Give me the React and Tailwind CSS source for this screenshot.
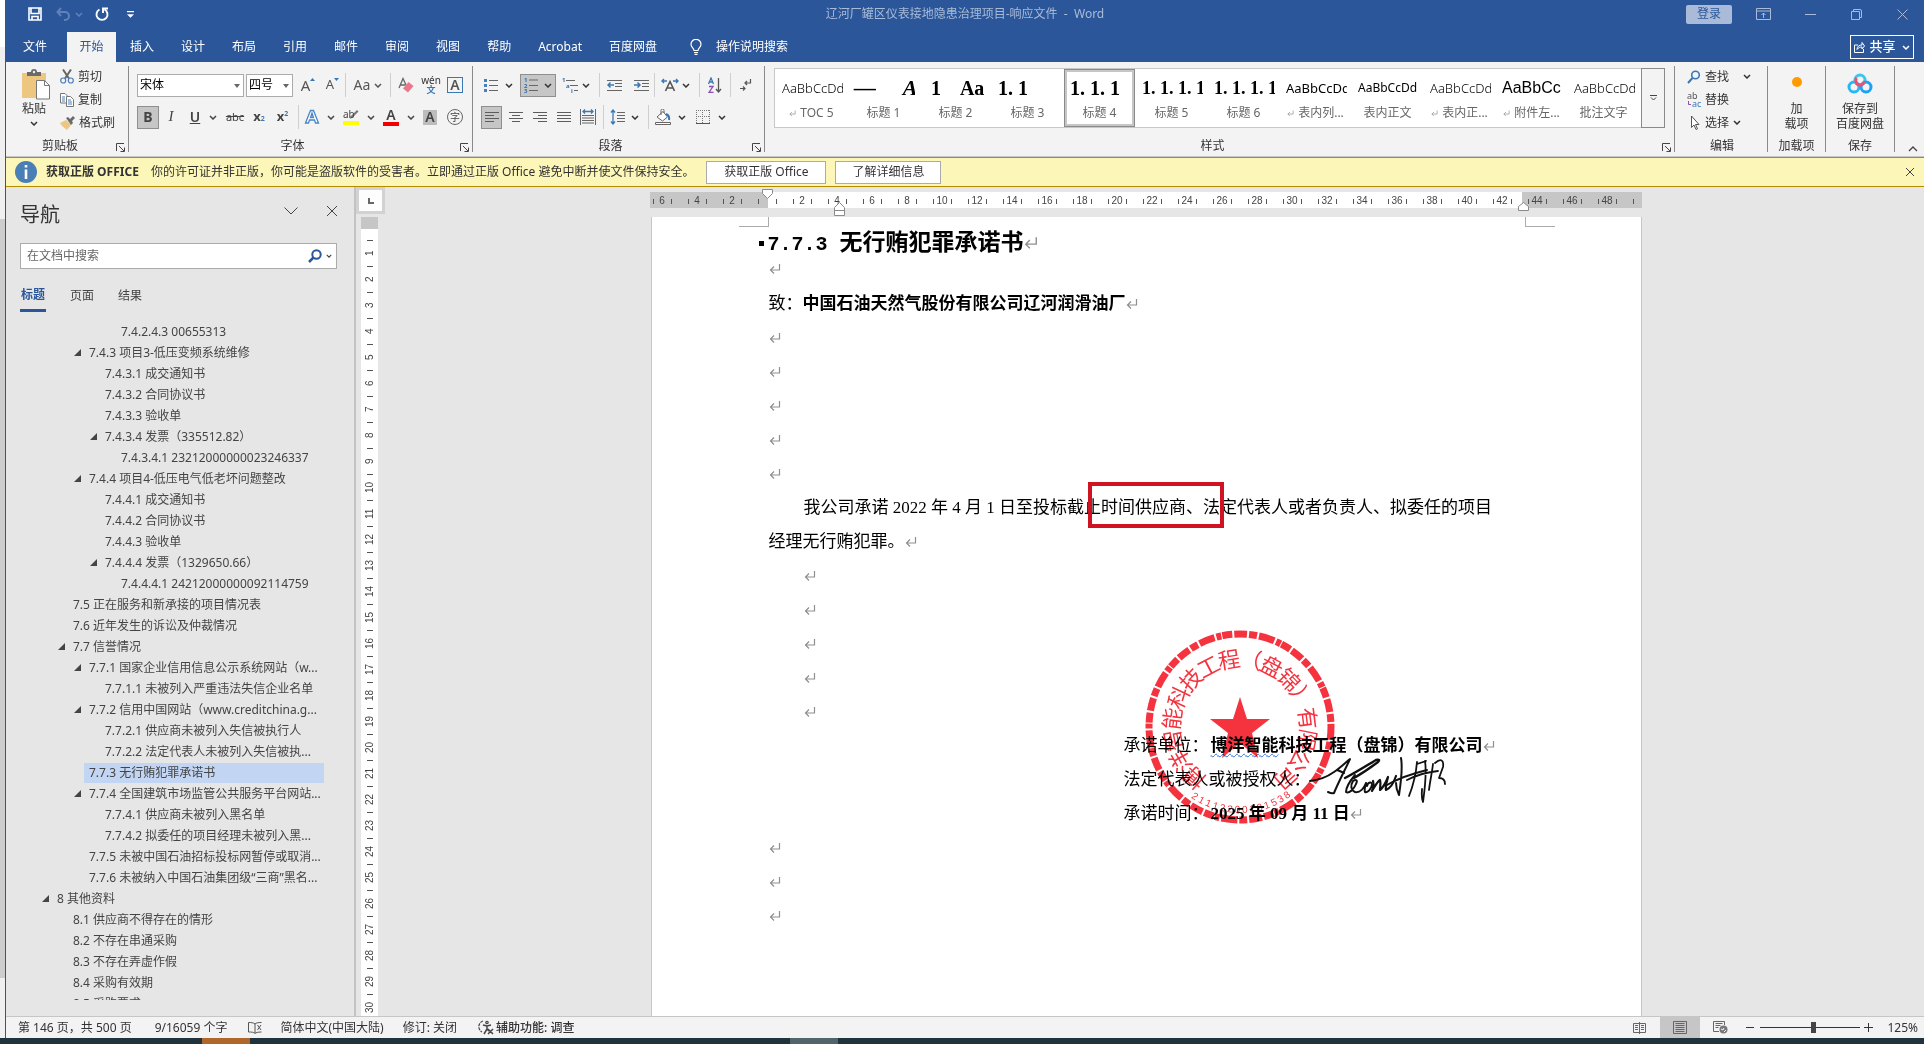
import { useState } from "react";

const tabs = ["插入", "设计", "布局", "引用", "邮件", "审阅", "视图", "帮助", "Acrobat", "百度网盘"];

const outline = [
  { level: 4, text: "7.4.2.4.3 00655313" },
  { level: 2, text: "7.4.3 项目3-低压变频系统维修", open: true },
  { level: 3, text: "7.4.3.1 成交通知书" },
  { level: 3, text: "7.4.3.2 合同协议书" },
  { level: 3, text: "7.4.3.3 验收单" },
  { level: 3, text: "7.4.3.4 发票（335512.82）", open: true },
  { level: 4, text: "7.4.3.4.1 23212000000023246337" },
  { level: 2, text: "7.4.4 项目4-低压电气低老坏问题整改", open: true },
  { level: 3, text: "7.4.4.1 成交通知书" },
  { level: 3, text: "7.4.4.2 合同协议书" },
  { level: 3, text: "7.4.4.3 验收单" },
  { level: 3, text: "7.4.4.4 发票（1329650.66）", open: true },
  { level: 4, text: "7.4.4.4.1 24212000000092114759" },
  { level: 1, text: "7.5 正在服务和新承接的项目情况表" },
  { level: 1, text: "7.6 近年发生的诉讼及仲裁情况" },
  { level: 1, text: "7.7 信誉情况", open: true },
  { level: 2, text: "7.7.1 国家企业信用信息公示系统网站（w...", open: true },
  { level: 3, text: "7.7.1.1 未被列入严重违法失信企业名单" },
  { level: 2, text: "7.7.2 信用中国网站（www.creditchina.g...", open: true },
  { level: 3, text: "7.7.2.1 供应商未被列入失信被执行人" },
  { level: 3, text: "7.7.2.2 法定代表人未被列入失信被执..." },
  { level: 2, text: "7.7.3 无行贿犯罪承诺书", active: true },
  { level: 2, text: "7.7.4 全国建筑市场监管公共服务平台网站...", open: true },
  { level: 3, text: "7.7.4.1 供应商未被列入黑名单" },
  { level: 3, text: "7.7.4.2 拟委任的项目经理未被列入黑..." },
  { level: 2, text: "7.7.5 未被中国石油招标投标网暂停或取消..." },
  { level: 2, text: "7.7.6 未被纳入中国石油集团级“三商”黑名..." },
  { level: 0, text: "8 其他资料", open: true },
  { level: 1, text: "8.1 供应商不得存在的情形" },
  { level: 1, text: "8.2 不存在串通采购" },
  { level: 1, text: "8.3 不存在弄虚作假" },
  { level: 1, text: "8.4 采购有效期" },
  { level: 1, text: "8.5 采购要求" },
];

const indents = ["pl-9", "pl-[52px]", "pl-[68px]", "pl-[84px]", "pl-[100px]"];

const serif = "font-['Liberation_Serif','Noto_Sans_CJK_SC',serif]";

const styles = [
  { name: "TOC 5", mark: true, sample: "AaBbCcDd", cls: "text-[13px] font-light" },
  { name: "标题 1", sample: "—     A", cls: "font-['Liberation_Serif',serif] text-[22px] font-bold italic" },
  { name: "标题 2", sample: " 1    Aa", cls: "font-['Liberation_Serif',serif] text-xl font-bold" },
  { name: "标题 3", sample: "1. 1       A", cls: "font-['Liberation_Serif',serif] text-xl font-bold" },
  { name: "标题 4", sample: "1. 1. 1", cls: "font-['Liberation_Serif',serif] text-xl font-bold", active: true },
  { name: "标题 5", sample: "1. 1. 1. 1", cls: "font-['Liberation_Serif',serif] text-lg font-bold" },
  { name: "标题 6", sample: "1. 1. 1. 1", cls: "font-['Liberation_Serif',serif] text-lg font-bold" },
  { name: "表内列...", mark: true, sample: "AaBbCcDd", cls: "text-[13px]" },
  { name: "表内正文", sample: "AaBbCcDd", cls: "text-xs" },
  { name: "表内正...", mark: true, sample: "AaBbCcDd", cls: "text-[13px] font-light" },
  { name: "附件左...", mark: true, sample: "AaBbCc", cls: "font-['Liberation_Sans',sans-serif] text-base" },
  { name: "批注文字", sample: "AaBbCcDd", cls: "text-[13px] font-light" },
];

const Chevron = ({ className = "" }) => (
  <svg viewBox="0 0 8 5" className={`h-[5px] w-2 shrink-0 ${className}`} fill="none" stroke="currentColor" strokeWidth="1.5">
    <path d="M1 1l3 3 3-3" />
  </svg>
);

const Sep = ({ className = "" }) => <span className={`h-6 w-px shrink-0 bg-[#cfcfcf] ${className}`} />;

const Tool = ({ label, className, children }) => (
  <button type="button" aria-label={label} className={`flex h-[23px] shrink-0 items-center justify-center ${className}`}>
    {children}
  </button>
);

const Drop = ({ className }) => (
  <Tool label="更多选项" className={className}>
    <Chevron />
  </Tool>
);

const Launcher = () => (
  <button type="button" aria-label="更多" className="absolute right-[3px] bottom-0">
    <svg viewBox="0 0 9 9" className="size-[9px]" fill="none" stroke="#444">
      <path d="M.5 8V.5H8M3 3l5 5M8.500 4.500v4h-4" />
    </svg>
  </button>
);

const Group = ({ label, launcher, className = "", labelClassName = "", children }) => (
  <div className={`relative mt-1 flex h-[86px] flex-col border-r border-[#8a8a8a] ${className}`}>
    {children}
    <div className={`mt-auto -mb-0.5 text-center leading-4 ${labelClassName}`}>{label}</div>
    {launcher && <Launcher />}
  </div>
);

const Lines = ({ rows }) => (
  <svg viewBox="0 0 14 14" className="size-3.5" stroke="#5c5c5c">
    {rows.map(([x1, x2], i) => (
      <path key={i} d={`M${x1} ${i * 3 + 2.5}H${x2}`} />
    ))}
  </svg>
);

const Return = ({ className = "size-3" }) => (
  <svg viewBox="0 0 12 12" className={`inline-block shrink-0 ${className}`} fill="none" stroke="#8f8f8f" strokeWidth="1.2">
    <path d="M10.500 1v6H1.500M5 3.500L1.500 7 5 10.500" />
  </svg>
);

const TitleBar = () => (
  <header className="bg-[#2b579a] text-white">
    <div className="grid h-8 grid-cols-[1fr_auto_1fr] items-center pb-1">
      <div className="flex items-center pl-[22px]">
        <button type="button" aria-label="保存">
          <svg viewBox="0 0 14 14" className="size-3.5" fill="none" stroke="#fff" strokeWidth="1.6">
            <path d="M1 1h12v12H1zM3 1v5.500h8V1M4 13V9.500h6V13" />
          </svg>
        </button>
        <button type="button" aria-label="撤消" className="ml-3.5 flex items-center gap-1 text-[#5f82b8]">
          <svg viewBox="0 0 15 14" className="h-3.5 w-[15px]" fill="none" stroke="currentColor" strokeWidth="2">
            <path d="M5 1L1.500 5 5 9M1.500 5h7.500a4 4 0 0 1 0 8H8" />
          </svg>
          <Chevron />
        </button>
        <button type="button" aria-label="重复" className="ml-3">
          <svg viewBox="0 0 14 14" className="size-3.5" fill="none" stroke="#fff" strokeWidth="1.9">
            <path d="M4.500 2.500A5.500 5.500 0 1 0 9.500 2.500M8 6V1.500h5" />
          </svg>
        </button>
        <button type="button" aria-label="自定义快速访问工具栏" className="ml-[18px]">
          <svg viewBox="0 0 7 7" className="size-[7px]" fill="#fff">
            <path d="M0 0h7v1.200H0zM0 3.200h7L3.500 6.700z" />
          </svg>
        </button>
      </div>
      <div className="text-[#a9bbd8]">辽河厂罐区仪表接地隐患治理项目-响应文件&nbsp; -&nbsp; Word</div>
      <div className="flex items-center justify-end pr-4 text-[#a9bbd8]">
        <button type="button" className="h-[19px] w-[46px] rounded-xs bg-[#a9bbd8] leading-4 text-[#2b579a]">登录</button>
        <button type="button" aria-label="功能区显示选项" className="ml-6">
          <svg viewBox="0 0 15 12" className="h-3 w-[15px]" fill="none" stroke="currentColor">
            <path d="M.5.5h14v11H.5zM.5 3h14M7.500 10V5M5.500 7l2-2 2 2" />
          </svg>
        </button>
        <button type="button" aria-label="最小化" className="ml-[34px]">
          <svg viewBox="0 0 11 11" className="size-[11px]" stroke="currentColor"><path d="M0 5.500h11" /></svg>
        </button>
        <button type="button" aria-label="还原" className="ml-[35px]">
          <svg viewBox="0 0 11 11" className="size-[11px]" fill="none" stroke="currentColor">
            <path d="M.5 2.500h8v8h-8zM2.500 2.500v-2H9a1.500 1.500 0 0 1 1.500 1.500v6.500h-2" />
          </svg>
        </button>
        <button type="button" aria-label="关闭" className="ml-[35px]">
          <svg viewBox="0 0 11 11" className="size-[11px]" stroke="currentColor"><path d="M.5.5l10 10M10.500.5l-10 10" /></svg>
        </button>
      </div>
    </div>
    <nav className="flex h-[30px] items-center">
      <button type="button" className="ml-[3px] h-full px-3.5">文件</button>
      <button type="button" className="ml-[6px] h-full w-[49px] bg-[#f3f3f3] text-[#2b579a]">开始</button>
      {tabs.map((tab) => (
        <button key={tab} type="button" className="ml-px h-full px-[13px]">{tab}</button>
      ))}
      <button type="button" className="ml-5 flex items-center gap-3.5">
        <svg viewBox="0 0 12 16" className="h-4 w-3" fill="none" stroke="#fff" strokeWidth="1.2">
          <path d="M4 11.500C4 9 1 8.500 1 5.300a5 5 0 0 1 10 0C11 8.500 8 9 8 11.500zM4 13.500h4M4.500 15.400h3" />
        </svg>
        操作说明搜索
      </button>
      <button type="button" className="mr-2.5 ml-auto flex h-6 w-16 items-center justify-center gap-1 border border-white">
        <svg viewBox="0 0 11 12" className="h-3 w-[11px]" fill="none" stroke="#fff">
          <path d="M4 4H.5v7.500h9V8M3 8.500c0-3 2-4.500 5-4.500V1.500L10.500 5 8 8V6C6 6 4.500 6.500 3 8.500z" />
        </svg>
        <span className="text-[13px] font-medium">共享</span>
        <Chevron className="ml-0.5" />
      </button>
    </nav>
  </header>
);

const Ribbon = () => (
  <section className="flex h-[95px] border-b border-[#c8c8c8] bg-[#f3f3f3] text-[#333]">
    <Group label="剪贴板" launcher className="w-[123px]" labelClassName="pr-3.5">
      <div className="-mt-px flex pl-4">
        <button type="button" className="flex w-7 flex-col items-center pt-1">
          <svg viewBox="0 0 28 31" className="h-[31px] w-7">
            <path d="M0 4h24v25H0z" fill="#edc680" />
            <path d="M5 7V3h4a3 3 0 0 1 6 0h4v4z" fill="#6b6b6b" />
            <circle cx="12" cy="3" r="1.200" fill="#f3f3f3" />
            <path d="M14.500 11.500h8l5 5V30h-13z" fill="#fff" stroke="#777" />
            <path d="M22.500 11.500v5h5" fill="none" stroke="#777" />
          </svg>
          <span className="mt-px -ml-1 leading-4 whitespace-nowrap">粘贴</span>
          <Chevron className="mt-1 -ml-1" />
        </button>
        <div className="ml-2.5 flex flex-col">
          <button type="button" className="flex h-[23px] items-center gap-1">
            <svg viewBox="0 0 14 15" className="h-[15px] w-3.5" fill="none">
              <path d="M3 .5l6 9M11 .5l-6 9" stroke="#666" strokeWidth="2" />
              <circle cx="3.200" cy="11.500" r="2.500" stroke="#4a7ebb" strokeWidth="1.200" />
              <circle cx="10.800" cy="11.500" r="2.500" stroke="#4a7ebb" strokeWidth="1.200" />
            </svg>
            剪切
          </button>
          <button type="button" className="flex h-[23px] items-center gap-1">
            <svg viewBox="0 0 14 14" className="size-3.5" fill="#fff" stroke="#777">
              <path d="M.5.5H5l2.500 2.500v7h-7z" />
              <path d="M6.500 3.500h4l3 3v7h-7z" />
              <path d="M2 4h3M2 6h3M2 8h3M8 7h3M8 9h4M8 11h4" stroke="#4a7ebb" />
            </svg>
            复制
          </button>
          <button type="button" className="flex h-[23px] items-center gap-1">
            <svg viewBox="0 0 15 14" className="h-3.5 w-[15px]">
              <path d="M6 4l5 5-4 5C4 12 1 9 0 7z" fill="#edc680" />
              <path d="M6 2l2-1 2 2 3-3 2 2-3 3 1 2-2 2z" fill="#6b6b6b" />
            </svg>
            格式刷
          </button>
        </div>
      </div>
    </Group>

    <Group label="字体" launcher className="w-[344px] pl-2" labelClassName="pr-6">
      <div className="flex items-center pt-[7px]">
        <div className="relative h-[23px] w-[107px]">
          <select aria-label="字体" className="size-full appearance-none border border-[#ababab] bg-white pl-0.5 leading-4 text-black">
            <option>宋体</option>
          </select>
          <span className="pointer-events-none absolute top-2.5 right-1 border-x-3 border-t-4 border-x-transparent border-t-[#666]" />
        </div>
        <div className="relative ml-0.5 h-[23px] w-[47px]">
          <select aria-label="字号" className="size-full appearance-none border border-[#ababab] bg-white pl-0.5 leading-4 text-black">
            <option>四号</option>
          </select>
          <span className="pointer-events-none absolute top-2.5 right-1 border-x-3 border-t-4 border-x-transparent border-t-[#666]" />
        </div>
        <Tool label="增大字号" className="ml-[3px] w-6 text-[15px] text-[#555]">
          A<svg viewBox="0 0 5 3" className="mb-3 h-[3px] w-[5px]" fill="#3a78b5"><path d="M0 3l2.500-3L5 3z" /></svg>
        </Tool>
        <Tool label="减小字号" className="w-[25px] text-[13px] text-[#555]">
          A<svg viewBox="0 0 5 3" className="mb-3 h-[3px] w-[5px]" fill="#3a78b5"><path d="M0 0l2.500 3L5 0z" /></svg>
        </Tool>
        <Sep />
        <Tool label="更改大小写" className="w-11 gap-1 text-sm text-[#555]">Aa<Chevron /></Tool>
        <Sep />
        <Tool label="清除格式" className="w-[30px]">
          <svg viewBox="0 0 16 16" className="size-4">
            <path d="M1 11L5 1.500 8.500 9M2.500 8h4.500" fill="none" stroke="#666" strokeWidth="1.300" />
            <path d="M10.500 5l5 4-5.500 6.500-5-4z" fill="#e8788a" />
          </svg>
        </Tool>
        <Tool label="拼音指南" className="w-5 flex-col text-[9px] leading-[10px]">
          <span className="text-[10px]">wén</span>
          <span className="font-bold text-[#3a78b5]">文</span>
        </Tool>
        <Tool label="字符边框" className="w-7">
          <span className="flex size-4 items-center justify-center border border-[#3a78b5] text-[14px] leading-4 font-semibold text-[#555]">A</span>
        </Tool>
      </div>
      <div className="mt-2 flex items-center text-[#444]">
        <Tool label="加粗" className="w-[22px] border border-[#8f8f8f] bg-[#c6c6c6] text-sm font-bold">B</Tool>
        <Tool label="倾斜" className="w-6 font-['Liberation_Serif',serif] text-[15px] italic">I</Tool>
        <Tool label="下划线" className="w-6 text-sm font-semibold underline">U</Tool>
        <Drop className="w-3" />
        <Tool label="删除线" className="w-8 text-[11px] line-through">abc</Tool>
        <Tool label="下标" className="w-4 text-[13px] font-bold">x<sub className="text-[7px] text-[#3a78b5]">2</sub></Tool>
        <Tool label="上标" className="w-[31px] text-[13px] font-bold">x<sup className="text-[7px] text-[#3a78b5]">2</sup></Tool>
        <Sep />
        <Tool label="文本效果" className="w-[26px]">
          <svg viewBox="0 0 16 16" className="size-4" fill="#fff" stroke="#4a86c5" strokeWidth="1.300">
            <path d="M1.500 14L6.500 1.500h3L14.500 14h-3l-1-3h-5l-1 3zM6.500 8.500h3L8 4z" />
          </svg>
        </Tool>
        <Drop className="w-3" />
        <Tool label="突出显示" className="w-7">
          <svg viewBox="0 0 16 16" className="size-4">
            <path d="M0 12h16v4H0z" fill="#ff0" />
            <path d="M7 10l1-3 6-6 1.500 1.500-6 6z" fill="#777" />
            <text x="0" y="9" fontSize="10" fill="#444">ab</text>
          </svg>
        </Tool>
        <Drop className="w-3" />
        <Tool label="字体颜色" className="w-7 flex-col text-sm leading-3 font-semibold">
          A<span className="mt-px h-1 w-4 bg-[#f00000]" />
        </Tool>
        <Drop className="w-3" />
        <Tool label="字符底纹" className="w-[26px]">
          <span className="flex h-[15px] w-3.5 items-center justify-center bg-[#bdbdbd] text-[14px] font-semibold">A</span>
        </Tool>
        <Tool label="带圈字符" className="w-6">
          <span className="flex size-4 items-center justify-center rounded-full border border-[#666] text-[10px] leading-3">字</span>
        </Tool>
      </div>
    </Group>

    <Group label="段落" launcher className="w-[292px] pl-2" labelClassName="pr-6">
      <div className="flex items-center pt-[7px]">
        <Tool label="项目符号" className="w-5">
          <svg viewBox="0 0 14 14" className="size-3.5">
            <path d="M5 2.500h9M5 7.500h9M5 12.500h9" stroke="#666" />
            <path d="M0 1h3v3H0zM0 6h3v3H0zM0 11h3v3H0z" fill="#4a7ebb" />
          </svg>
        </Tool>
        <Drop className="w-4" />
        <Tool label="编号" className="ml-[3px] w-9 gap-1.5 border border-[#8f8f8f] bg-[#c6c6c6]">
          <svg viewBox="0 0 14 16" className="h-4 w-3.5">
            <path d="M5 3h9M5 8.500h9M5 13.500h9" stroke="#666" />
            <g fill="#2f6fb0" fontSize="6" fontWeight="bold"><text y="5">1</text><text y="10.500">2</text><text y="16">3</text></g>
          </svg>
          <Chevron />
        </Tool>
        <Tool label="多级列表" className="ml-1 w-5">
          <svg viewBox="0 0 17 16" className="h-4 w-[17px]">
            <path d="M4 3.500h9M8 8.500h8M12 13.500h4" stroke="#666" />
            <g fill="#2f6fb0" fontSize="6" fontWeight="bold"><text y="5">1</text><text x="4" y="11">a</text><text x="9" y="16">i</text></g>
          </svg>
        </Tool>
        <Drop className="w-3" />
        <Sep className="ml-[7px]" />
        <Tool label="减少缩进" className="w-7">
          <svg viewBox="0 0 15 13" className="h-[13px] w-[15px]" fill="none" stroke="#666">
            <path d="M0 1.500h15M8 4.500h7M8 7.500h7M0 11.500h15" />
            <path d="M7 6H1M3.500 3.500L1 6l2.500 2.500" stroke="#3a78b5" strokeWidth="1.500" />
          </svg>
        </Tool>
        <Tool label="增加缩进" className="w-[26px]">
          <svg viewBox="0 0 15 13" className="h-[13px] w-[15px]" fill="none" stroke="#666">
            <path d="M0 1.500h15M8 4.500h7M8 7.500h7M0 11.500h15" />
            <path d="M0 6h6M3.500 3.500L6 6 3.500 8.500" stroke="#3a78b5" strokeWidth="1.500" />
          </svg>
        </Tool>
        <Sep />
        <Tool label="中文版式" className="ml-[3px] w-6">
          <svg viewBox="0 0 18 14" className="h-3.5 w-[18px]" fill="none">
            <path d="M4.500 13L9 3.500 13.500 13M6.500 10h5" stroke="#555" strokeWidth="1.600" />
            <path d="M6 3H1M3 1L1 3l2 2M12 3h5M15 1l2 2-2 2" stroke="#3a78b5" strokeWidth="1.400" />
          </svg>
        </Tool>
        <Drop className="w-2" />
        <Sep className="ml-[9px]" />
        <Tool label="排序" className="w-[30px]">
          <svg viewBox="0 0 14 16" className="h-4 w-3.5" fill="none" strokeWidth="1.300">
            <path d="M.5 7L3 1l2.500 6M1.500 5h3" stroke="#3a78b5" />
            <path d="M1 9.500h4L1 15.500h4.500" stroke="#8a4fb0" />
            <path d="M10.500 1v13.500M8 12l2.500 3 2.500-3" stroke="#555" />
          </svg>
        </Tool>
        <Sep />
        <Tool label="显示编辑标记" className="w-[30px]">
          <svg viewBox="0 0 12 12" className="size-3" fill="none" stroke="#555" strokeWidth="1.200">
            <path d="M10.500 0v4H5M7 2L5 4l2 2M0 9.500h5M3 7.500l2 2-2 2" />
          </svg>
        </Tool>
      </div>
      <div className="mt-2 flex items-center">
        <Tool label="左对齐" className="w-[21px] border border-[#8f8f8f] bg-[#c6c6c6]">
          <Lines rows={[[0, 14], [0, 9], [0, 14], [0, 9]]} />
        </Tool>
        <Tool label="居中" className="w-[27px]"><Lines rows={[[0, 14], [3, 11], [0, 14], [3, 11]]} /></Tool>
        <Tool label="右对齐" className="w-[22px]"><Lines rows={[[0, 14], [5, 14], [0, 14], [5, 14]]} /></Tool>
        <Tool label="两端对齐" className="w-[25px]"><Lines rows={[[0, 14], [0, 14], [0, 14], [0, 14]]} /></Tool>
        <Tool label="分散对齐" className="w-6">
          <svg viewBox="0 0 16 16" className="size-4" fill="none" stroke="#666">
            <path d="M.5 0v16M15.500 0v16M2 6.500h12M2 9h12M2 11.500h12M2 14h12" />
            <path d="M3 2.500h10M5 .5l-2 2 2 2M11 .5l2 2-2 2" stroke="#3a78b5" strokeWidth="1.300" />
          </svg>
        </Tool>
        <Sep className="ml-[3px]" />
        <Tool label="行距" className="w-[26px]">
          <svg viewBox="0 0 15 16" className="h-4 w-[15px]" fill="none" stroke="#666">
            <path d="M7 3.500h8M7 6.500h8M7 9.500h8M7 12.500h8" />
            <path d="M3 1v14M1 3.500L3 1l2 2.500M1 12.500L3 15l2-2.500" stroke="#3a78b5" strokeWidth="1.300" />
          </svg>
        </Tool>
        <Drop className="w-2.5" />
        <Sep className="ml-2" />
        <Tool label="底纹" className="w-7">
          <svg viewBox="0 0 16 16" className="size-4" fill="none" stroke="#666">
            <path d="M.5 13.500h15v2H.5zM2 8l6-5.500L12.500 8 7.500 12zM6 6V1.500a1.500 1.500 0 0 1 3 0V4" fill="#fff" />
            <path d="M11 5c3 1 3.500 3 3 6" stroke="#3a78b5" strokeWidth="2" />
          </svg>
        </Tool>
        <Drop className="w-2.5" />
        <Tool label="边框" className="ml-0.5 w-7">
          <svg viewBox="0 0 14 14" className="size-3.5" fill="none" stroke="#777">
            <path d="M.5 0v13M6.500 0v13M13.500 0v13M0 .5h14M0 6.500h14" strokeDasharray="1 1" />
            <path d="M0 13.500h14" stroke="#555" />
          </svg>
        </Tool>
        <Drop className="w-2.5" />
      </div>
    </Group>

    <Group label="样式" launcher className="min-w-0 flex-1 px-[9px]" labelClassName="pr-3.5">
      <div className="mt-0.5 flex h-[60px] border border-[#c8c8c8] bg-white">
        <div className="flex min-w-0 flex-1 overflow-hidden">
          {styles.map((s) => (
            <button
              key={s.name}
              type="button"
              className={`ml-px flex w-[71px] shrink-0 flex-col px-1 ${s.active ? "border-3 border-[#c6c6c6] px-px outline outline-[#8a8a8a] -outline-offset-1" : "py-[3px]"}`}
            >
              <span className={`h-8 w-full overflow-hidden px-0.5 text-left leading-8 whitespace-pre text-black ${s.cls}`}>{s.sample}</span>
              <span className="flex w-full items-center justify-center gap-1 leading-[18px] whitespace-nowrap text-[#666]">
                {s.mark && <Return className="size-[7px]" />}
                {s.name}
              </span>
            </button>
          ))}
        </div>
        <button type="button" aria-label="其他样式" className="-my-px -mr-px flex w-6 items-center justify-center border border-[#8a8a8a] bg-[#f3f3f3]">
          <svg viewBox="0 0 7 6" className="h-1.5 w-[7px]" fill="none" stroke="#444">
            <path d="M0 .5h7M1 2.500L3.500 5 6 2.500" />
          </svg>
        </button>
      </div>
    </Group>

    <Group label="编辑" className="w-[93px] pl-3" labelClassName="pr-2.5">
      <button type="button" className="-mt-px flex h-[23px] items-center gap-1">
        <svg viewBox="0 0 14 14" className="size-3.5" fill="none" stroke="#3a78b5" strokeWidth="1.600">
          <circle cx="8.500" cy="5" r="3.800" /><path d="M5.500 8L1 13" strokeWidth="2" />
        </svg>
        查找
        <Chevron className="ml-2.5" />
      </button>
      <button type="button" className="flex h-[23px] items-center gap-0.5">
        <svg viewBox="0 0 16 16" className="size-4">
          <text x="0" y="7" fontSize="9" fill="#555">ab</text>
          <text x="5" y="15" fontSize="9" fill="#3a78b5">ac</text>
          <path d="M1.500 9v3.500H4" fill="none" stroke="#8a4fb0" />
        </svg>
        替换
      </button>
      <button type="button" className="flex h-[23px] items-center gap-1">
        <svg viewBox="0 0 14 16" className="h-4 w-3.5" fill="#fff" stroke="#555">
          <path d="M4.500 1v11.500L7 10l2 4.500 1.500-.7-2-4.300H12z" />
        </svg>
        选择
        <Chevron />
      </button>
    </Group>

    <Group label="加载项" className="w-[58px]">
      <button type="button" className="flex flex-col items-center pt-[11px] leading-[15px]">
        <span className="mb-3.5 size-2.5 rounded-full bg-[#ff9a00]" />
        加<br />载项
      </button>
    </Group>

    <Group label="保存" className="w-[69px]">
      <button type="button" className="flex flex-col items-center pt-[7px] leading-[15px]">
        <svg viewBox="0 0 26 21" className="mb-[7px] h-[21px] w-[26px]" fill="none" strokeWidth="3">
          <circle cx="13" cy="7" r="5" stroke="#3cc6ea" />
          <circle cx="7" cy="14" r="5" stroke="#29b6f6" />
          <circle cx="19" cy="14" r="5" stroke="#1ea0f5" />
          <path d="M9.500 5a4.500 4.500 0 0 0 3.500 7 4.500 4.500 0 0 0 4.500-4" stroke="#f0506e" />
        </svg>
        保存到<br />百度网盘
      </button>
    </Group>
    <button type="button" aria-label="折叠功能区" className="flex w-[29px] items-end justify-end pr-[6px] pb-1">
      <svg viewBox="0 0 10 6" className="h-1.5 w-2.5" fill="none" stroke="#444" strokeWidth="1.300"><path d="M1 5l4-4 4 4" /></svg>
    </button>
  </section>
);

const LicenseBar = () => (
  <section className="flex h-[30px] items-center border-y border-[#b38b00] bg-[#fcf6b8] pr-[9px] pl-[9px] text-[#333]">
    <svg viewBox="0 0 22 22" className="size-[22px]">
      <circle cx="11" cy="11" r="11" fill="#4a7fb5" />
      <path d="M9.700 4h2.600v2.600H9.700zM9.700 8.500h2.600V18H9.700z" fill="#fff" />
    </svg>
    <strong className="ml-[9px] font-bold">获取正版 OFFICE</strong>
    <span className="ml-3">你的许可证并非正版，你可能是盗版软件的受害者。立即通过正版 Office 避免中断并使文件保持安全。</span>
    <button type="button" className="ml-3 h-[23px] w-[120px] border border-[#ababab] bg-white">获取正版 Office</button>
    <button type="button" className="ml-[9px] h-[23px] w-[106px] border border-[#ababab] bg-white">了解详细信息</button>
    <button type="button" aria-label="关闭" className="ml-auto">
      <svg viewBox="0 0 10 10" className="size-2.5" stroke="#444"><path d="M1 1l8 8M9 1L1 9" /></svg>
    </button>
  </section>
);

const NavPane = () => {
  const [query, setQuery] = useState("");

  return (
    <aside className="flex w-[350px] shrink-0 flex-col border-r-2 border-[#c3c3c3] pt-3.5 pb-4 text-[#444]">
      <div className="flex items-center pr-4 pl-3.5">
        <h2 className="text-xl leading-7 text-[#333]">导航</h2>
        <button type="button" aria-label="任务窗格选项" className="mb-2 ml-auto">
          <svg viewBox="0 0 14 8" className="h-2 w-3.5" fill="none" stroke="#444"><path d="M.5.5L7 7 13.500.5" /></svg>
        </button>
        <button type="button" aria-label="关闭导航" className="mb-2 ml-7">
          <svg viewBox="0 0 12 12" className="size-3" stroke="#444"><path d="M1 1l10 10M11 1L1 11" /></svg>
        </button>
      </div>
      <div className="mt-3.5 mr-[17px] ml-3.5 flex h-[26px] items-center border border-[#ababab] bg-white pr-1">
        <input
          type="text"
          aria-label="在文档中搜索"
          value={query}
          onChange={(e) => setQuery(e.target.value)}
          placeholder="在文档中搜索"
          className="min-w-0 flex-1 pl-1.5 outline-none placeholder:text-[#666]"
        />
        <button type="button" aria-label="搜索" className="flex items-center gap-1 text-[#444]">
          <svg viewBox="0 0 14 14" className="size-3.5" fill="none" stroke="#2b579a" strokeWidth="2">
            <circle cx="8.500" cy="5.500" r="4.200" /><path d="M5.500 8.500L1 13" strokeWidth="2.500" />
          </svg>
          <svg viewBox="0 0 8 5" className="h-1 w-1.5" fill="none" stroke="#444" strokeWidth="1.500"><path d="M1 1l3 3 3-3" /></svg>
        </button>
      </div>
      <div className="mt-4 flex gap-6 pl-3.5">
        <button type="button" className="h-[27px] w-[26px] border-b-3 border-[#2b579a] pb-1 font-bold text-[#2b579a]">标题</button>
        <button type="button" className="h-[27px] pb-1.5">页面</button>
        <button type="button" className="h-[27px] pb-1.5">结果</button>
      </div>
      <ul className="mt-[9px] min-h-0 flex-1 overflow-hidden">
        {outline.map((item) => (
          <li key={item.text} className={`flex h-[21px] items-center ${indents[item.level]}`}>
            <span className="w-2.5 shrink-0">
              {item.open && <svg viewBox="0 0 7 7" className="size-[7px]" fill="#444"><path d="M7 0v7H0z" /></svg>}
            </span>
            <a
              href="#doc"
              className={`truncate pl-[5px] leading-5 ${item.active ? "mr-[30px] flex-1 bg-[#c2d5f2]" : ""}`}
            >
              {item.text}
            </a>
          </li>
        ))}
      </ul>
    </aside>
  );
};

const VerticalRuler = () => (
  <div className="w-[29px] shrink-0 overflow-hidden text-[10px] text-[#444]">
    <div className="flex h-[27px] w-full items-center justify-center border-3 border-[#d2d2d2] bg-[#fdfdfd]">
      <span className="size-1.5 border-b-2 border-l-2 border-[#666]" />
    </div>
    <div className="mt-[3px] ml-[5px] flex w-[17px] flex-col bg-white">
      <div className="h-3 bg-[#c6c6c6]" />
      <div className="h-[11px]" />
      {Array.from({ length: 31 }, (_, i) => (
        <div key={i} className="flex h-[26px] shrink-0 flex-col items-center">
          <span className="h-px w-1.5 bg-[#555]" />
          <span className="flex flex-1 rotate-180 items-center justify-center font-['Liberation_Sans',sans-serif] leading-3 [writing-mode:vertical-rl]">{i + 1}</span>
        </div>
      ))}
    </div>
  </div>
);

const marks = [6, 4, 2, "", 2, 4, 6, 8, 10, 12, 14, 16, 18, 20, 22, 24, 26, 28, 30, 32, 34, 36, 38, 40, 42, 44, 46, 48, ""];

const IndentMark = ({ className, d }) => (
  <svg viewBox="0 0 11 14" className={`absolute h-3.5 w-[11px] ${className}`} fill="#fff" stroke="#8a8a8a">
    <path d={d} />
  </svg>
);

const HorizontalRuler = () => (
  <div className="relative mt-[5px] h-[25px]">
    <div className="flex h-4 overflow-hidden bg-[linear-gradient(to_right,#c6c6c6_118px,#fff_118px,#fff_872px,#c6c6c6_872px)]">
      {marks.map((n, i) => (
        <div
          key={i}
          className={`flex w-[35px] shrink-0 items-center justify-center pt-0.5 font-['Liberation_Sans',sans-serif] text-[10px] text-[#444] ${i === 0 ? "-ml-[5px]" : ""}`}
        >
          <span className="h-[5px] w-px bg-[#555]" />
          <span className="w-[17px] text-center leading-[14px]">{n}</span>
          <span className="h-[5px] w-px bg-[#555]" />
        </div>
      ))}
    </div>
    <IndentMark className="-top-[3px] left-[112px]" d="M.5.5h10v4l-5 5-5-5z" />
    <IndentMark className="top-2.5 left-[184px]" d="M.5 13.500v-8l5-5 5 5v8zM.5 8.500h10" />
    <IndentMark className="top-2.5 left-[868px]" d="M.5 8.500v-4l5-4 5 4v4z" />
  </div>
);

const sealName = "博洋智能科技工程（盘锦）有限公司";
const sealCode = "21112200131538";

const Seal = () => (
  <svg viewBox="-97 -99 194 198" className="absolute top-[411px] left-[491px] h-[198px] w-[194px] mix-blend-multiply" fill="#f5333f">
    <g fill="none" stroke="#f5333f">
      <ellipse rx="91" ry="93" strokeWidth="7" strokeDasharray="13 2 8 2 16 2 5 1 10 2" />
    </g>
    <g fontFamily="'Noto Sans CJK SC', sans-serif" fontSize="22" textAnchor="middle">
      {[...sealName].map((c, i) => (
        <text key={i} transform={`rotate(${-138 + i * 18.4}) translate(0 -60)`}>{c}</text>
      ))}
    </g>
    <g fontFamily="'Liberation Sans', sans-serif" fontSize="10" textAnchor="middle">
      {[...sealCode].map((c, i) => (
        <text key={i} transform={`rotate(${33 - i * 5.200}) translate(0 86)`}>{c}</text>
      ))}
    </g>
    <path d="M0-30L7-8H30L12 6 18 31 0 16-18 31-12 6-30-8H-7z" />
  </svg>
);

const Signature = () => (
  <svg viewBox="0 0 140 50" className="absolute top-[539px] left-[657px] h-[50px] w-[140px]" fill="none" stroke="#111" strokeWidth="2" strokeLinecap="round" strokeLinejoin="round">
    <path d="M1 25c9-1 17-4 24-9 6-4 11-9 16-13-5 11-11 22-16 34-2 1-4 0-6-1M28 14c3 1 5 2 7 3" />
    <path d="M36 22C46 17 57 10 67 4c3-1 4 0 2 2C61 12 52 18 45 22" strokeWidth="2.400" />
    <path d="M46 19c-5 6-9 12-9 17 3 2 8-3 10-8 2-4 0-5-3-3-3 5-2 9 2 11 5 1 9-4 11-9-1 4-2 7-1 9 3 1 6-3 7-7 0-4-4-3-5 1" />
    <path d="M64 25c1 3 0 7-1 10 3-5 5-9 8-11 1 3 0 7 0 10 4-3 6-8 8-13-1 5-3 9-2 13 5-2 8-8 10-14" strokeWidth="2.200" />
    <path d="M78 29c10-6 24-11 40-15M92 2c2 11 0 24-2 37-2-4-3-8-3-12" />
    <path d="M98 24c10-5 21-8 31-9M108 6c-1 12-4 24-8 34M116 5c2 13 0 26-2 41-2-5-1-9-1-13M108 8l9-3M124 8c-1 9-3 17-4 26M126 7c6-5 9-3 8 4l-4 11c4 0 6 2 6 6" strokeWidth="1.800" />
  </svg>
);

const Blank = ({ indent }) => (
  <p className={`flex h-[34px] items-center ${indent ? "pl-[35px]" : ""}`}><Return /></p>
);

const Page = () => (
  <article
    id="doc"
    className={`relative ml-px min-h-0 flex-1 overflow-hidden border-x border-[#c6c6c6] bg-white pt-[9px] pl-[117px] text-[17px] text-black ${serif}`}
  >
    <span className="absolute top-0 left-[87px] h-2.5 w-[30px] border-r border-b border-[#ababab]" />
    <span className="absolute top-0 left-[873px] h-2.5 w-[30px] border-b border-l border-[#ababab]" />

    <h1 className="-ml-2.5 flex h-[34px] items-center text-[23px] font-bold">
      <span className="mr-1 size-[5px] bg-black" />
      <span className="whitespace-pre"><span className="font-['Liberation_Mono',monospace] text-xl">7.7.3 </span>无行贿犯罪承诺书</span>
      <Return className="size-3.5" />
    </h1>
    <p className="flex h-[18px] items-center"><Return /></p>
    <p className="mt-[9px] flex h-[34px] items-center">
      致：<strong>中国石油天然气股份有限公司辽河润滑油厂</strong><Return />
    </p>
    <Blank />
    <Blank />
    <Blank />
    <Blank />
    <Blank />
    <p className="indent-[35px] leading-[34px] whitespace-nowrap">
      我公司承诺 2022 年 4 月 1 日至投标截止时间供应商、法定代表人或者负责人、拟委任的项目
    </p>
    <p className="flex h-[34px] items-center">经理无行贿犯罪。<Return /></p>
    <Blank indent />
    <Blank indent />
    <Blank indent />
    <Blank indent />
    <Blank indent />
    <dl className="grid grid-cols-[87px_auto] pl-[355px] leading-[34px] whitespace-nowrap">
      <dt>承诺单位：</dt>
      <dd className="flex items-center font-bold">
        <span className="leading-5 underline decoration-[#2f6fe0] decoration-wavy decoration-1 underline-offset-2">博洋智能</span>
        科技工程（盘锦）有限公司<Return />
      </dd>
      <dt className="col-span-2">法定代表人或被授权人：</dt>
      <dt>承诺时间：</dt>
      <dd className="flex items-center font-bold">2025 年 09 月 11 日<Return /></dd>
    </dl>
    <Blank />
    <Blank />
    <Blank />

    <span className="absolute top-[265px] left-[436px] h-[46px] w-[136px] border-4 border-[#d01322]" />
    <Seal />
    <Signature />
  </article>
);

const StatusBar = () => {
  const [zoom, setZoom] = useState(53);

  return (
    <footer className="flex h-[22px] shrink-0 items-center border-t border-[#c6c6c6] bg-[#f3f3f3] pr-1.5 pl-3 text-[#333]">
      <span>第 146 页，共 500 页</span>
      <span className="ml-[23px]">9/16059 个字</span>
      <svg viewBox="0 0 14 12" className="ml-[21px] h-3 w-3.5" fill="none" stroke="#555">
        <path d="M7 11V2C5 .5 3 .5.5.5V10c3 0 5 0 6.500 1.500 1-1 3-1.500 6.500-1.500M7 2C8 .8 10 .5 13.500.5M9.500 3l3.500 5M13 3L9.500 8" />
      </svg>
      <span className="ml-[18px]">简体中文(中国大陆)</span>
      <span className="ml-[19px]">修订: 关闭</span>
      <svg viewBox="0 0 16 15" className="ml-[21px] h-[15px] w-4" fill="none" stroke="#444" strokeWidth="1.200">
        <path d="M5 1A6 6 0 0 0 4 12" strokeDasharray="3 1" />
        <circle cx="9" cy="2.500" r="1.200" />
        <path d="M5 5l4 1 4-1M9 6v3l-3 5M9 9l2 2M10 9l5 5M15 9l-5 5" strokeWidth="1.500" />
      </svg>
      <span className="ml-0.5 font-medium">辅助功能: 调查</span>

      <button type="button" aria-label="阅读视图" className="ml-auto">
        <svg viewBox="0 0 13 12" className="h-3 w-[13px]" fill="none" stroke="#666">
          <path d="M6.500 1.500H.5v9h6zM6.500 1.500h6v9h-6zM6.500 0v12M2 3.500h3M2 5.500h3M2 7.500h3M8 3.500h3M8 5.500h3M8 7.500h3" />
        </svg>
      </button>
      <button type="button" aria-label="页面视图" className="ml-3.5 flex h-full w-10 items-center justify-center bg-[#c6c6c6]">
        <svg viewBox="0 0 14 13" className="h-[13px] w-3.5" fill="none" stroke="#666">
          <path d="M.5.5h13v12H.5zM2.500 2.500h9M2.500 4.500h9M2.500 6.500h9M2.500 8.500h9M2.500 10.500h9" />
        </svg>
      </button>
      <button type="button" aria-label="Web 版式视图" className="ml-[13px]">
        <svg viewBox="0 0 15 13" className="h-[13px] w-[15px]" fill="none" stroke="#666">
          <path d="M6 10.500H.5V.5h11V4M2.500 2.500h7M2.500 4.500h5M2.500 6.500h3" />
          <circle cx="10.500" cy="8.500" r="4" fill="#777" stroke="none" />
          <path d="M8 8l2 1 1-2M11 11l2-2" stroke="#f3f3f3" />
        </svg>
      </button>
      <button type="button" aria-label="缩小" className="ml-4 flex size-3 items-center justify-center">
        <span className="h-px w-2 bg-[#333]" />
      </button>
      <input
        type="range"
        aria-label="缩放"
        min="0"
        max="100"
        value={zoom}
        onChange={(e) => setZoom(Number(e.target.value))}
        className="mx-1 h-3 w-[100px] appearance-none bg-[linear-gradient(#333,#333)] bg-[length:100%_1px] bg-center bg-no-repeat [&::-webkit-slider-thumb]:h-[11px] [&::-webkit-slider-thumb]:w-[5px] [&::-webkit-slider-thumb]:appearance-none [&::-webkit-slider-thumb]:bg-[#444]"
      />
      <button type="button" aria-label="放大">
        <svg viewBox="0 0 9 9" className="size-[9px]" stroke="#333"><path d="M0 4.500h9M4.500 0v9" /></svg>
      </button>
      <span className="ml-3.5">125%</span>
    </footer>
  );
};

const App = () => (
  <div className="flex h-screen flex-col overflow-hidden bg-[#20323b] font-['Noto_Sans','Noto_Sans_CJK_SC',sans-serif] text-xs">
    <div className="flex min-h-0 flex-1">
      {/* Window behind */}
      <div className="flex w-[5px] shrink-0 flex-col bg-[#cdcdcd]">
        <div className="h-[47px] bg-white" />
        <div className="h-[172px] bg-[#f0f0f0]" />
        <div className="mt-auto h-[60px] bg-[#f0f0f0]" />
      </div>

      <div className="flex min-w-0 flex-1 flex-col border-l border-[#2b579a] bg-[#e6e6e6]">
        <TitleBar />
        <Ribbon />
        <LicenseBar />
        <main className="flex min-h-0 flex-1">
          <NavPane />
          <VerticalRuler />
          <div className="flex min-w-0 flex-1 justify-center pr-[18px]">
            <div className="flex w-[992px] flex-col">
              <HorizontalRuler />
              <Page />
            </div>
          </div>
        </main>
        <StatusBar />
      </div>
    </div>

    {/* Taskbar edge */}
    <div className="flex h-1.5 shrink-0 bg-[#20323b]">
      <div className="ml-[202px] w-12 bg-[#b0672c]" />
      <div className="ml-[540px] w-12 bg-[#52636a]" />
    </div>
  </div>
);

export default App;
